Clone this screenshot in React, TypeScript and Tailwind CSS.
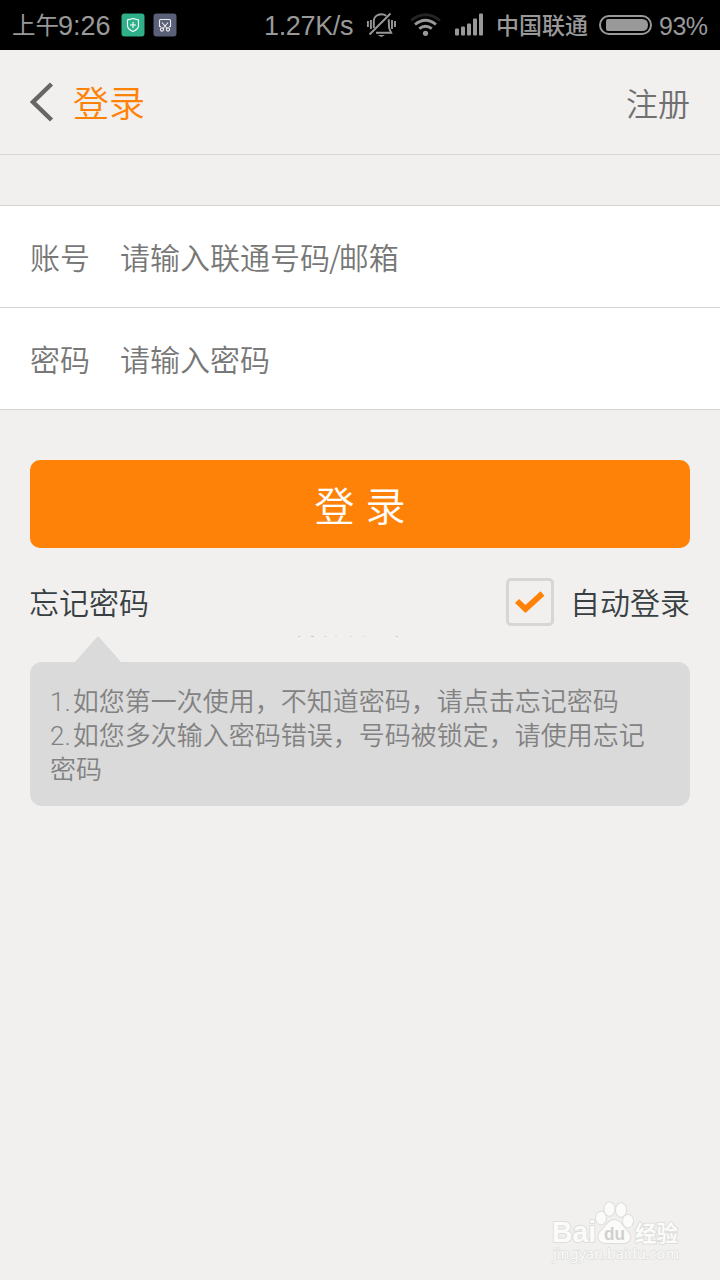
import React from "react";

const latin = "font-['Liberation_Sans','Noto_Sans_CJK_SC',sans-serif]";
const light = "font-['Noto_Sans_CJK_SC',sans-serif]";

function StatusBar() {
  return (
    <header className={`flex h-[50px] items-center bg-black pl-3 pr-[12px] text-[26px] leading-[48px] text-[#999999] ${latin}`}>
      <div className="flex h-[50px] w-[99px] items-center whitespace-nowrap pt-[2px]">
        <span className="w-[46px] text-[23.5px]">上午</span>
        <span className="text-[27px]">9:26</span>
      </div>
      <svg className="ml-[10px] h-6 w-6 shrink-0" viewBox="0 0 24 24">
        <rect x="0.5" y="0.5" width="23" height="23" rx="3" fill="#2fb088" />
        <path d="M12 5.5 L17.5 7 V12.5 C17.5 15.5 15 17.3 12 18.5 C9 17.3 6.5 15.5 6.5 12.5 V7 Z M12 9 V15 M9 12 H15" fill="none" stroke="#fff" strokeWidth="1.1" />
      </svg>
      <svg className="ml-2 h-6 w-6 shrink-0" viewBox="0 0 24 24">
        <rect x="0.5" y="0.5" width="23" height="23" rx="3" fill="#5b6079" />
        <path d="M8 13.5 H6.5 V7.5 Q6.5 6.5 7.5 6.5 H16.5 Q17.5 6.5 17.5 7.5 V13.5 H16 M9 9.5 L14 15.5 M15 9.5 L10 15.5" fill="none" stroke="#eee" strokeWidth="1.1" />
        <circle cx="9" cy="16.5" r="1.6" fill="none" stroke="#eee" strokeWidth="1.1" />
        <circle cx="15" cy="16.5" r="1.6" fill="none" stroke="#eee" strokeWidth="1.1" />
      </svg>
      <span className="ml-[87px] w-[90px] whitespace-nowrap pt-[2px] text-[27px] tracking-[-0.35px]">1.27K/s</span>
      <svg className="ml-[12px] h-[26px] w-[30px] shrink-0" viewBox="366 12 30 26" fill="none" stroke="#999" strokeWidth="1.9">
        <path d="M367.9 21 V27 M370.9 20 V29 M392 20 V29 M395 21 V27" />
        <path d="M373.8 28 V21 C373.8 17 377 14.2 381.4 14.2 C383.3 14.2 385 14.8 386.3 15.8 M388.6 19.2 C389.2 22 388.4 26 389.4 28.8 L391.2 32.7 H376" />
        <path d="M369.5 34.5 L390.5 13.5" />
        <path d="M377.7 35 H385 L381.4 37 Z" fill="#999" stroke="none" />
      </svg>
      <svg className="ml-[13px] h-[26px] w-[32px] shrink-0" viewBox="409 12 32 26" fill="none" strokeWidth="2.8">
        <path d="M411 20.5 Q425.5 9 440 20.5" stroke="#252525" />
        <path d="M415 24.5 Q425.5 16 436 24.5 M419.2 28.7 Q425.5 23.8 431.8 28.7" stroke="#999" />
        <circle cx="425.5" cy="33.3" r="2.6" fill="#999" />
      </svg>
      <svg className="ml-[14px] h-6 w-7 shrink-0" viewBox="0 0 28 24" fill="#999">
        <rect x="0" y="15.5" width="4" height="7" rx="1" />
        <rect x="6" y="13.5" width="4" height="9" rx="1" />
        <rect x="12" y="10.5" width="4" height="12" rx="1" />
        <rect x="18" y="5.5" width="4" height="17" rx="1" />
        <rect x="24" y="0.5" width="4" height="22" rx="1" />
      </svg>
      <span className="ml-[13px] w-[92px] whitespace-nowrap pt-[2px] text-[23px] font-medium">中国联通</span>
      <svg className="ml-[11px] h-5 w-[53px] shrink-0" viewBox="0 0 53 20">
        <rect x="1" y="1" width="51" height="18" rx="9" fill="none" stroke="#999" strokeWidth="2" />
        <path d="M9 4 H43 Q49 4 49 10 Q49 16 43 16 H9 Q7 16 7 14 V6 Q7 4 9 4 Z" fill="#999" />
      </svg>
      <span className="ml-[7px] pt-[2px] text-[25px] tracking-[-0.5px]">93%</span>
    </header>
  );
}

function Field({ label, hint }: { label: string; hint: React.ReactNode }) {
  return (
    <label className="flex h-[102px] items-center border-b border-[#d2d3d3] bg-white pl-[30px] text-[30px] text-[#777777]">
      <span className="w-[90px]">{label}</span>
      <span>{hint}</span>
    </label>
  );
}

function Watermark() {
  return (
    <svg className={`absolute left-[545px] top-[1198px] h-[70px] w-[145px] ${latin}`} viewBox="545 1198 145 70">
      <g fill="#fbfbfa" stroke="#dededd" strokeWidth="2" paintOrder="stroke" strokeLinejoin="round">
        <text x="552" y="1242" fontSize="29" fontWeight="700" textLength="44" lengthAdjust="spacingAndGlyphs">Bai</text>
        <ellipse cx="601" cy="1218" rx="5" ry="6.3" />
        <ellipse cx="609.5" cy="1209" rx="5" ry="6.8" />
        <ellipse cx="621" cy="1210" rx="5" ry="6.8" />
        <ellipse cx="628" cy="1221" rx="5" ry="6.3" />
        <path d="M614.5 1220 C620 1220 623 1227 628 1232 C633 1238 629 1244 621 1243 H608 C600 1244 596 1238 600 1232 C606 1227 608 1220 614.5 1220 Z" />
        <text x="635" y="1241" fontSize="22" fontWeight="700" textLength="43" lengthAdjust="spacingAndGlyphs">经验</text>
        <text className="font-['Noto_Sans',sans-serif]" x="553" y="1258.5" fontSize="14.5" fontWeight="400" strokeWidth="1.4" textLength="126" lengthAdjust="spacingAndGlyphs">jingyan.baidu.com</text>
      </g>
      <text x="604" y="1240" fontSize="19" fontWeight="700" fill="#d0d0cf" textLength="21" lengthAdjust="spacingAndGlyphs">du</text>
    </svg>
  );
}

function Tip({ index, children }: { index: string; children: string }) {
  return (
    <p>
      <span className="inline-block w-[22.7px] font-['Roboto',sans-serif] font-light leading-none">{index}</span>
      {children}
    </p>
  );
}

export default function App() {
  return (
    <div className={`relative h-[1280px] w-[720px] overflow-hidden bg-[#f1f0ee] font-[350] ${light}`}>
      <div className="font-normal">
        <StatusBar />
      </div>
      <nav className="flex h-[105px] items-center justify-between border-b border-[#d6d6d6] pl-[29px] pr-[30px]">
        <div className="flex items-center">
          <svg className="mr-[19px] h-10 w-[25px]" viewBox="0 0 25 40">
            <path d="M22.5 2 L4 20 L22.5 38" fill="none" stroke="#666" strokeWidth="4.5" />
          </svg>
          <h1 className="-mt-[3px] text-[36px] leading-[40px] text-[#ff8208]">登录</h1>
        </div>
        <button className="-mt-px text-[32px] text-[#707070]">注册</button>
      </nav>
      <section className="mt-[50px] border-t border-[#d2d3d3]">
        <Field label="账号" hint={<>请输入联通号码<span className="-ml-px mr-[-2px]">/</span>邮箱</>} />
        <Field label="密码" hint="请输入密码" />
      </section>
      <main className="px-[30px] pt-[50px]">
        <button className="block h-[88px] w-full rounded-[10px] bg-[#ff8208] text-[40px] text-white">登<span className="inline-block w-[11px]"> </span>录</button>
        <div className="mt-[30px] flex h-12 items-center justify-between text-[30px] text-[#384043]">
          <span className="-ml-px -mt-px">忘记密码</span>
          <label className="flex items-center">
            <span className="mr-4 flex h-12 w-12 items-center justify-center rounded-[5px] border-[3px] border-[#d6d6d5]">
              <svg className="h-6 w-[30px]" viewBox="0 0 30 24">
                <path d="M2 11 L10.5 19 L27.5 3.5" fill="none" stroke="#ff8208" strokeWidth="5.8" />
              </svg>
            </span>
            <span className="-mt-px">自动登录</span>
          </label>
        </div>
        <div className="pt-[10px]">
          <svg className="ml-[45px] block h-[26px] w-[46px]" viewBox="0 0 46 26">
            <path d="M0 26 L23 0 L46 26 Z" fill="#dadada" />
          </svg>
          <div className="h-[144px] rounded-xl bg-[#dadada] pl-5 pr-[40px] pt-[21px] text-[26px] leading-[34px] text-[#828282]">
            <Tip index="1.">如您第一次使用，不知道密码，请点击忘记密码</Tip>
            <Tip index="2.">如您多次输入密码错误，号码被锁定，请使用忘记密码</Tip>
          </div>
        </div>
      </main>
      <svg className="absolute left-[296px] top-[635px] h-1 w-[104px]" viewBox="0 0 104 4" fill="#c8c8c7">
        <path d="M2 1h2v1h-2z M15 1h3v1h-3z M100 1h2v1h-2z" />
        <path d="M28 1h3v1h-3z M39 1h2v1h-2z M54 1h2v1h-2z M67 1h2v1h-2z" opacity=".5" />
      </svg>
      <Watermark />
    </div>
  );
}
